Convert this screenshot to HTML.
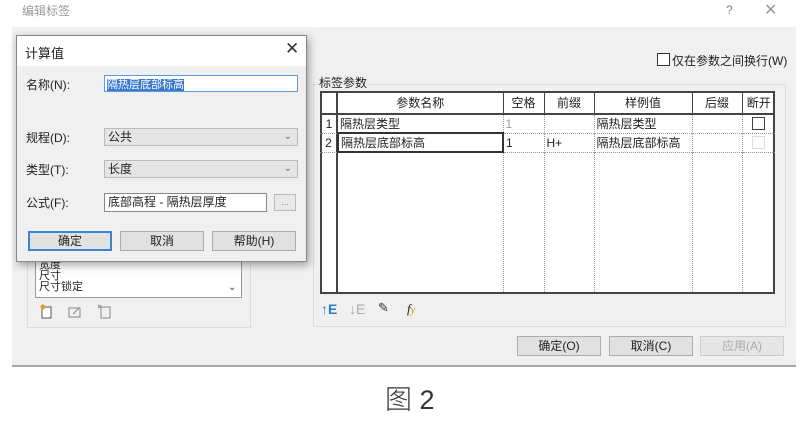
<!DOCTYPE html>
<html><head><meta charset="utf-8"><style>
*{box-sizing:border-box;margin:0;padding:0}
body{width:806px;height:426px;background:#fff;position:relative;overflow:hidden;font-family:"Liberation Sans","Noto Sans CJK SC",sans-serif;font-size:12px;color:#222}
.a{position:absolute}
.btn{position:absolute;background:#e1e1e1;border:1px solid #adadad;text-align:center;line-height:18px;font-size:12px}
.cb{position:absolute;width:13px;height:13px;border:1px solid #333;background:#fff}
table{border-collapse:collapse}
.li{height:11px;line-height:11px;font-size:11px}
</style></head><body>
<div class="a" style="left:22px;top:2px;color:#999;font-size:12px">编辑标签</div>
<div class="a" style="left:726px;top:3px;color:#888;font-size:12px">?</div>
<div class="a" style="left:764px;top:0px;color:#999;font-size:16px">✕</div>
<div class="a" style="left:12px;top:27px;width:784px;height:340px;background:#f0f0f0;border-bottom:2px solid #a8a8a8"></div>

<div class="a" style="left:27px;top:250px;width:224px;height:78px;border:1px solid #dcdcdc"></div>
<div class="a" style="left:35px;top:259px;width:207px;height:39px;background:#fff;border:1px solid #999;padding-left:3px;overflow:hidden"><div class="li">宽度</div><div class="li">尺寸</div><div class="li">尺寸锁定</div></div>
<div class="a" style="left:228px;top:282px;font-size:10px;color:#444">⌄</div>
<svg class="a" style="left:38px;top:302px" width="90" height="18"><rect x="4" y="5" width="9" height="11" fill="#fff" stroke="#555"/><circle cx="5" cy="5" r="2.5" fill="#e69a3a"/><rect x="31" y="6" width="11" height="9" fill="none" stroke="#888"/><path d="M35 12 L41 6" stroke="#888"/><rect x="63" y="5" width="9" height="11" fill="none" stroke="#888"/><path d="M60 3 l3 3 M63 3 l-3 3" stroke="#888"/></svg>

<div class="cb" style="left:657px;top:53px"></div>
<div class="a" style="left:672px;top:52px;font-size:12px">仅在参数之间换行(W)</div>
<div class="a" style="left:313px;top:84px;width:473px;height:243px;border:1px solid #dcdcdc"></div>
<div class="a" style="left:319px;top:74px;font-size:12px;background:#f0f0f0">标签参数</div>
<div class="a" style="left:320px;top:91px;width:455px;height:203px;background:#fff;border:2px solid #444"></div>
<div class="a" style="left:320px;top:91px;width:18px;height:203px;border-right:2px solid #444"></div>
<table class="a" style="left:320px;top:91px;font-size:12px">
<tr style="height:23px;border-bottom:2px solid #444"><td style="width:18px"></td><td style="width:165px;text-align:center;border-right:1px solid #444">参数名称</td><td style="width:41px;text-align:center;border-right:1px solid #444">空格</td><td style="width:50px;text-align:center;border-right:1px solid #444">前缀</td><td style="width:98px;text-align:center;border-right:1px solid #444">样例值</td><td style="width:50px;text-align:center;border-right:1px solid #444">后缀</td><td style="width:33px;text-align:center">断开</td></tr>
<tr style="height:19px;border-bottom:1px dotted #999"><td style="text-align:center">1</td><td style="padding-left:2px;border-right:1px dotted #999">隔热层类型</td><td style="color:#999;padding-left:2px;border-right:1px dotted #999">1</td><td style="border-right:1px dotted #999"></td><td style="padding-left:2px;border-right:1px dotted #999">隔热层类型</td><td style="border-right:1px dotted #999"></td><td><div style="width:13px;height:13px;border:1px solid #444;margin:auto"></div></td></tr>
<tr style="height:19px;border-bottom:1px dotted #999"><td style="text-align:center">2</td><td style="padding-left:2px;border:2px solid #333">隔热层底部标高</td><td style="padding-left:2px;border-right:1px dotted #999">1</td><td style="padding-left:2px;border-right:1px dotted #999">H+</td><td style="padding-left:2px;border-right:1px dotted #999">隔热层底部标高</td><td style="border-right:1px dotted #999"></td><td><div style="width:13px;height:13px;border:1px solid #ddd;margin:auto"></div></td></tr>
<tr style="height:140px"><td></td><td style="border-right:1px dotted #999"></td><td style="border-right:1px dotted #999"></td><td style="border-right:1px dotted #999"></td><td style="border-right:1px dotted #999"></td><td style="border-right:1px dotted #999"></td><td></td></tr>
</table>
<div class="a" style="left:321px;top:301px;font-size:14px;color:#2a7ad0;font-weight:bold">↑E</div>
<div class="a" style="left:349px;top:301px;font-size:14px;color:#aaa">↓E</div>
<div class="a" style="left:378px;top:300px;font-size:13px;color:#333">✎</div>
<div class="a" style="left:407px;top:301px;font-size:13px;font-style:italic;font-family:'Liberation Serif',serif">f<span style="color:#c90;font-size:10px">y</span></div>
<div class="btn" style="left:517px;top:336px;width:84px;height:20px">确定(O)</div>
<div class="btn" style="left:609px;top:336px;width:84px;height:20px">取消(C)</div>
<div class="btn" style="left:700px;top:336px;width:84px;height:20px;color:#aaa;background:#e6e6e6;border-color:#ccc">应用(A)</div>

<div class="a" style="left:16px;top:35px;width:291px;height:227px;background:#f0f0f0;border:1px solid #888;box-shadow:2px 3px 8px rgba(0,0,0,.35)">
<div style="height:30px;background:#fff;position:relative"><div class="a" style="left:8px;top:7px;font-size:13px">计算值</div><div class="a" style="left:268px;top:3px;font-size:17px;color:#333">✕</div></div>
</div>
<div class="a" style="left:26px;top:76px">名称(N):</div>
<div class="a" style="left:104px;top:75px;width:194px;height:17px;background:#fff;border:1px solid #5a9ad8"><span style="background:#3a78d0;color:#fff;font-size:11px;margin-left:2px">隔热层底部标高</span></div>
<div class="a" style="left:26px;top:129px">规程(D):</div>
<div class="a" style="left:104px;top:128px;width:194px;height:18px;background:#e5e5e5;border:1px solid #bbb;padding-left:3px;line-height:16px">公共<span style="float:right;margin-right:5px;color:#666;font-size:10px">⌄</span></div>
<div class="a" style="left:26px;top:161px">类型(T):</div>
<div class="a" style="left:104px;top:160px;width:194px;height:18px;background:#e5e5e5;border:1px solid #bbb;padding-left:3px;line-height:16px">长度<span style="float:right;margin-right:5px;color:#666;font-size:10px">⌄</span></div>
<div class="a" style="left:26px;top:194px">公式(F):</div>
<div class="a" style="left:104px;top:193px;width:163px;height:19px;background:#fff;border:1px solid #888;padding-left:3px;line-height:17px">底部高程 - 隔热层厚度</div>
<div class="a" style="left:274px;top:194px;width:22px;height:17px;border:1px solid #bbb;background:#e9e9e9;font-size:9px;text-align:center;color:#888;line-height:14px">...</div>
<div class="btn" style="left:28px;top:231px;width:84px;height:20px;border:2px solid #3a84d0;line-height:16px">确定</div>
<div class="btn" style="left:120px;top:231px;width:84px;height:20px">取消</div>
<div class="btn" style="left:212px;top:231px;width:84px;height:20px">帮助(H)</div>

<div class="a" style="left:385px;top:378px;font-size:27px;font-weight:300;color:#333">图 2</div>
</body></html>
